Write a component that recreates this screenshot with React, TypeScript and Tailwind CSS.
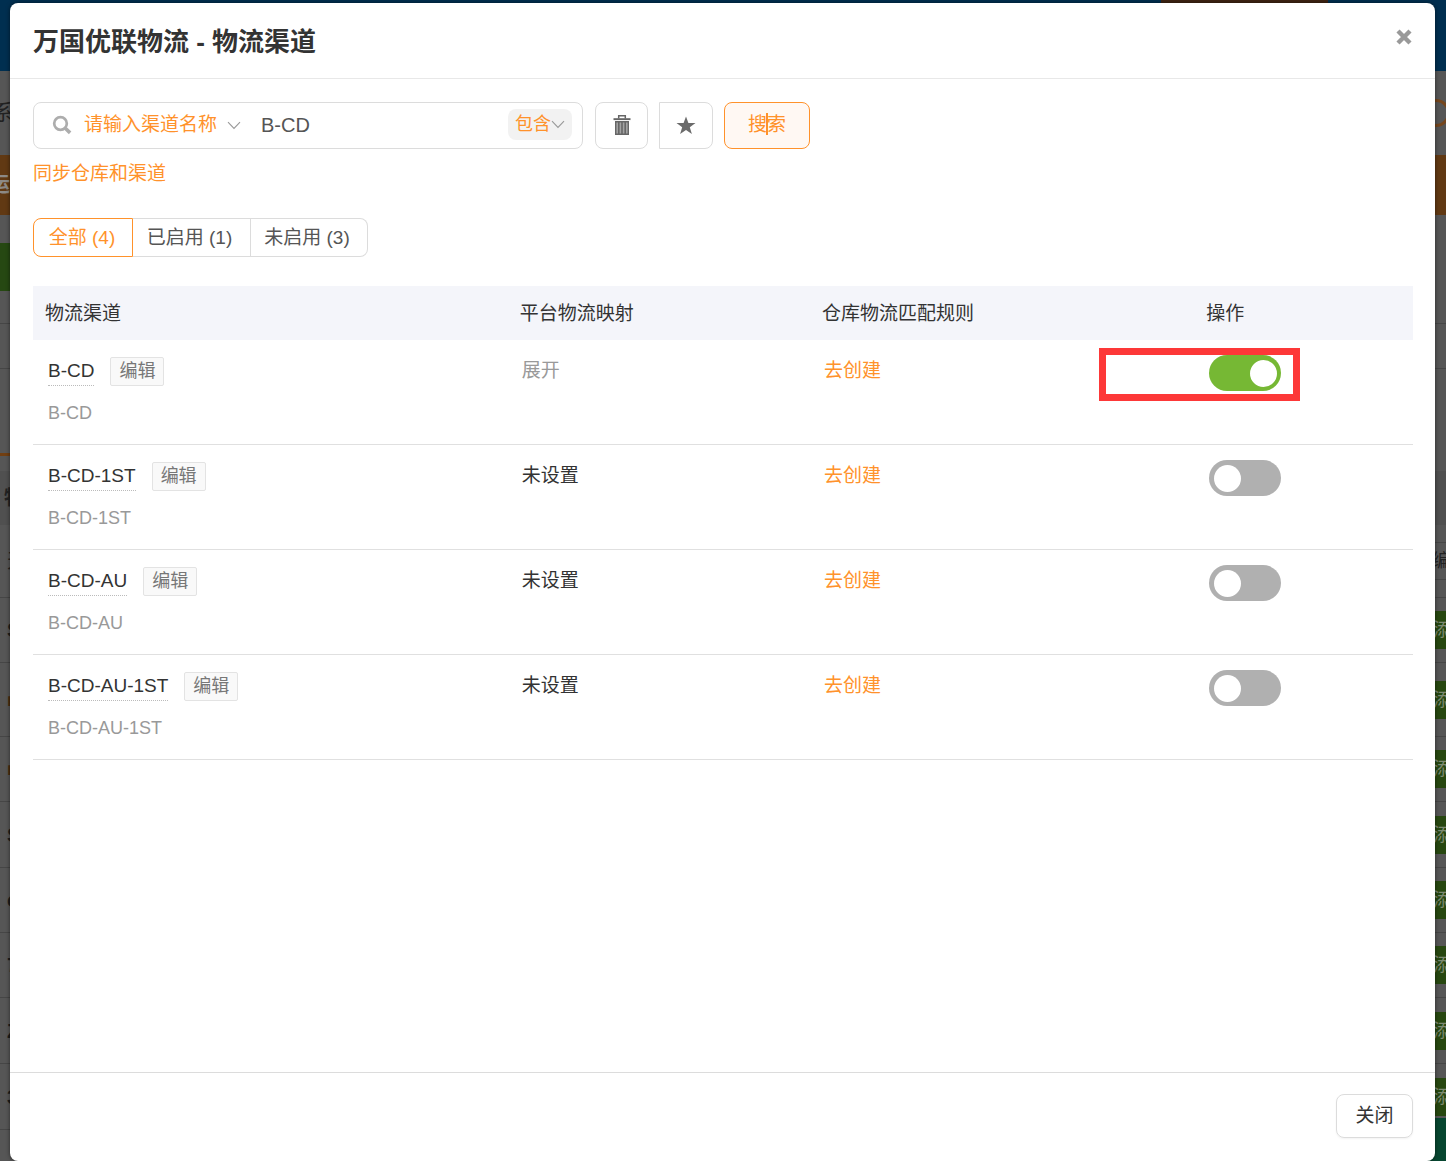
import { useState } from "react";

const channels = [
  { name: "B-CD", mapped: true, enabled: true },
  { name: "B-CD-1ST", mapped: false, enabled: false },
  { name: "B-CD-AU", mapped: false, enabled: false },
  { name: "B-CD-AU-1ST", mapped: false, enabled: false },
];

const backdropRows = [
  { mark: "S", color: "text-[#1c1c1c]", height: "h-[65px]" },
  { mark: "■", color: "text-[#4a2c10]", height: "h-[74px]" },
  { mark: "■", color: "text-[#4a2c10]", height: "h-[65px]" },
  { mark: "S", color: "text-[#1c1c1c]", height: "h-[66px]" },
  { mark: "e", color: "text-[#1c1c1c]", height: "h-[65px]" },
  { mark: "7", color: "text-[#1c1c1c]", height: "h-[65px]" },
  { mark: "Z", color: "text-[#1c1c1c]", height: "h-[66px]" },
  { mark: "3", color: "text-[#1c1c1c]", height: "h-[66px]" },
];

function Chevron() {
  return (
    <svg width="14" height="9" viewBox="0 0 14 9" fill="none" stroke="#999" strokeWidth="1.1" aria-hidden="true" className="shrink-0">
      <path d="M1 1.2l6 6.2 6-6.2" />
    </svg>
  );
}

function SearchIcon() {
  return (
    <svg width="20" height="20" viewBox="0 0 20 20" fill="none" stroke="#adadad" aria-hidden="true" className="shrink-0">
      <circle cx="8.5" cy="8.5" r="6.3" strokeWidth="2.7" />
      <path d="M13.3 13.3l4.8 4.6" strokeWidth="3.6" />
    </svg>
  );
}

function TrashIcon() {
  return (
    <svg width="18" height="20" viewBox="0 0 18 20" aria-hidden="true">
      <path d="M5.7 3.5V.8h6.6v2.7" fill="none" stroke="#666" strokeWidth="1.5" />
      <path d="M.5 3.2h17v1.9H.5z" fill="#666" />
      <path d="M2 6h14v14H2z" fill="#666" />
      <path d="M4.2 7.5v11M7.4 7.5v11M10.6 7.5v11M13.8 7.5v11" stroke="#a3a3a3" strokeWidth="1.6" />
    </svg>
  );
}

function StarIcon() {
  return (
    <svg width="20" height="19" viewBox="0 0 20 19" fill="#6b6b6b" aria-hidden="true">
      <path d="M10 .6l2.4 6.3 7.1.2-5.7 4.2 2.1 6.8L10 14.1l-5.9 4 2.1-6.8L.5 7.1l7.1-.2z" />
    </svg>
  );
}

function CloseIcon() {
  return (
    <svg width="16" height="16" viewBox="0 0 16 16" stroke="#999" strokeWidth="4.4" aria-hidden="true">
      <path d="M2 2l12 12M14 2L2 14" />
    </svg>
  );
}

function Backdrop() {
  return (
    <div aria-hidden="true" className="absolute inset-0 flex flex-col overflow-hidden bg-[#565656] text-[20px] font-bold leading-none">
      <div className="flex h-[71px] shrink-0 items-start bg-[#002f50]">
        <div className="mr-[118px] ml-auto h-[3px] w-[167px] bg-[#3f2413]" />
      </div>
      <div className="flex h-[84px] shrink-0 items-center justify-between">
        <span className="-ml-2 text-[22px] font-normal text-[#222]">系</span>
        <span className="-mr-1 h-7 w-9 rounded-full border-[3px] border-[#75461d]" />
      </div>
      <div className="flex h-[60px] shrink-0 items-center bg-[#613913]">
        <span className="-ml-2.5 text-[#8d8a86]">运</span>
      </div>
      <div className="h-7 shrink-0" />
      <div className="h-12 w-5 shrink-0 bg-[#264812]" />
      <div className="h-8 shrink-0" />
      <div className="h-[46px] shrink-0 border-y border-[#464646]" />
      <div className="flex h-[102px] shrink-0 flex-col justify-end">
        <div className="h-[3px] w-5 bg-[#713f12]" />
        <div className="h-[15px]" />
      </div>
      <div className="flex h-[54px] shrink-0 items-center bg-[#505050]">
        <span className="ml-1 text-[#222]">物</span>
      </div>
      <div className="flex h-[73px] shrink-0 items-center justify-between border-b border-[#464646]">
        <span className="ml-[7px] font-normal text-[#222]">天</span>
        <span className="-mr-2 flex h-[38px] w-5 items-center border-y border-[#464646] text-[18px] font-normal text-[#222]">
          <span className="-ml-0.5">编</span>
        </span>
      </div>
      {backdropRows.map((row, i) => (
        <div key={i} className={"flex shrink-0 items-center justify-between border-b border-[#464646] " + row.height}>
          <span className={"ml-[7px] " + row.color}>{row.mark}</span>
          <span className="flex h-[38px] w-[13px] items-center overflow-hidden bg-[#274710] text-[18px] font-normal whitespace-nowrap text-[#7d8a72]">
            添
          </span>
        </div>
      ))}
      <div className="flex flex-1 items-end justify-end">
        <div className="-mt-3 h-[43px] w-10 self-end bg-[#074630]" />
      </div>
    </div>
  );
}

function Toggle({ label, initial }: { label: string; initial: boolean }) {
  const [on, setOn] = useState(initial);
  return (
    <label className="flex h-9 w-[72px] items-center rounded-full bg-[#b0b0b0] pr-1 pl-[5px] has-checked:justify-end has-checked:bg-[#76b834]">
      <input type="checkbox" role="switch" aria-label={label} checked={on} onChange={(e) => setOn(e.target.checked)} className="size-[27px] appearance-none rounded-full bg-white" />
    </label>
  );
}

export default function App() {
  const [query, setQuery] = useState("B-CD");
  return (
    <div className="relative flex min-h-screen bg-[#565656] pt-[3px] pr-[11px] pl-[10px] font-['Liberation_Sans','Noto_Sans_CJK_SC',sans-serif] text-[#333]">
      <Backdrop />
      <div role="dialog" aria-labelledby="dialog-title" className="relative flex flex-1 flex-col rounded-lg bg-white shadow-[0_0_4px_#0008]">
        <header className="flex h-[76px] items-center justify-between border-b border-[#e8e8e8] pr-[23px] pl-[23px]">
          <h1 id="dialog-title" className="pt-1 text-[26px] font-bold">万国优联物流 - 物流渠道</h1>
          <button aria-label="关闭对话框" className="mb-2"><CloseIcon /></button>
        </header>

        <main className="flex flex-1 flex-col pt-[23px] pr-[22px] pl-[23px]">
          <form className="flex h-[47px] text-[20px]" onSubmit={(e) => e.preventDefault()}>
            <div className="flex w-[550px] items-center rounded-lg border border-[#dcdcdc] pr-2.5 pb-0.5 pl-[18px]">
              <SearchIcon />
              <button type="button" className="ml-3 flex items-center gap-2.5 pt-0.5 text-[19px] whitespace-nowrap text-[#ff922b]">
                请输入渠道名称 <Chevron />
              </button>
              <input aria-label="渠道名称" value={query} onChange={(e) => setQuery(e.target.value)} className="ml-5 min-w-0 flex-1 text-[#555] outline-none" />
              <button type="button" className="flex h-[31px] items-center rounded-lg bg-[#f2f2f2] px-[7px] text-[18px] whitespace-nowrap text-[#ff922b]">
                包含 <Chevron />
              </button>
            </div>
            <button type="button" aria-label="清空" className="ml-3 flex w-[53px] items-center justify-center rounded-lg border border-[#dcdcdc] pb-0.5"><TrashIcon /></button>
            <button type="button" aria-label="收藏" className="ml-[11px] flex w-[54px] items-center justify-center rounded-r-lg border border-[#dcdcdc]"><StarIcon /></button>
            <button type="submit" className="relative ml-[11px] flex w-[86px] items-center justify-center rounded-lg border border-[#ff922b] bg-[#fff8f3] text-[19px] text-[#ff922b]">
              搜索
              <span className="absolute top-[10px] h-[22px] w-0.5 bg-[#ff922b]" />
            </button>
          </form>
          <a href="#sync" className="mt-[11px] self-start text-[19px] leading-7 text-[#ff922b]">同步仓库和渠道</a>

          <div className="mt-[30px] flex h-[39px] text-[19px] text-[#555]">
            <button className="w-[100px] rounded-l-lg border border-[#ff922b] pt-0.5 pr-0.5 text-[#ff922b]">全部 (4)</button>
            <button className="w-[118px] border-y border-r border-[#dcdcdc] pt-0.5 pr-1">已启用 (1)</button>
            <button className="w-[117px] rounded-r-lg border-y border-r border-[#dcdcdc] pt-0.5 pr-1">未启用 (3)</button>
          </div>

          <table className="mt-[29px] w-full table-fixed border-separate border-spacing-0 text-left text-[19px]">
            <colgroup>
              <col className="w-[34.4%]" />
              <col className="w-[21.9%]" />
              <col className="w-[20.9%]" />
              <col />
            </colgroup>
            <thead>
              <tr className="h-[54px] bg-[#f4f5fa]">
                <th className="pt-0.5 pl-3 font-normal">物流渠道</th>
                <th className="pt-0.5 pl-3 font-normal">平台物流映射</th>
                <th className="pt-0.5 pl-3 font-normal">仓库物流匹配规则</th>
                <th className="pt-0.5 pl-[108px] font-normal">操作</th>
              </tr>
            </thead>
            <tbody>
              {channels.map((c) => (
                <tr key={c.name} className="h-[105px] align-top *:border-b *:border-[#e0e0e0]">
                  <td className="pt-[17px] pl-[15px]">
                    <div className="flex items-start">
                      <span className="h-[29px] border-b border-dotted border-[#bbb] leading-[27px]">{c.name}</span>
                      <button className="ml-4 h-[29px] rounded-xs border border-[#e3e3e3] bg-[#f9f9f9] px-2 text-[18px] leading-[25px] text-[#777]">编辑</button>
                    </div>
                    <div className="mt-[13px] text-[18px] leading-7 text-[#999]">{c.name}</div>
                  </td>
                  <td className="pt-[17px] pl-3.5 leading-7">
                    {c.mapped ? <button className="text-[#999]">展开</button> : "未设置"}
                  </td>
                  <td className="pt-[17px] pl-3.5 leading-7">
                    <a href="#create" className="text-[#ff922b]">去创建</a>
                  </td>
                  <td className="pt-[15px] pl-[111px]">
                    <div className="relative w-[72px]">
                      <Toggle label={"启用 " + c.name} initial={c.enabled} />
                      {c.enabled && <div className="pointer-events-none absolute -top-[7px] -left-[110px] h-[53px] w-[201px] border-[7px] border-[#fd3838]" />}
                    </div>
                  </td>
                </tr>
              ))}
            </tbody>
          </table>
        </main>

        <footer className="flex h-[89px] items-start justify-end border-t border-[#dcdcdc] pt-[21px] pr-[22px]">
          <button className="h-11 w-[77px] rounded-lg border border-[#dcdcdc] text-[19px] shadow-xs">关闭</button>
        </footer>
      </div>
    </div>
  );
}
